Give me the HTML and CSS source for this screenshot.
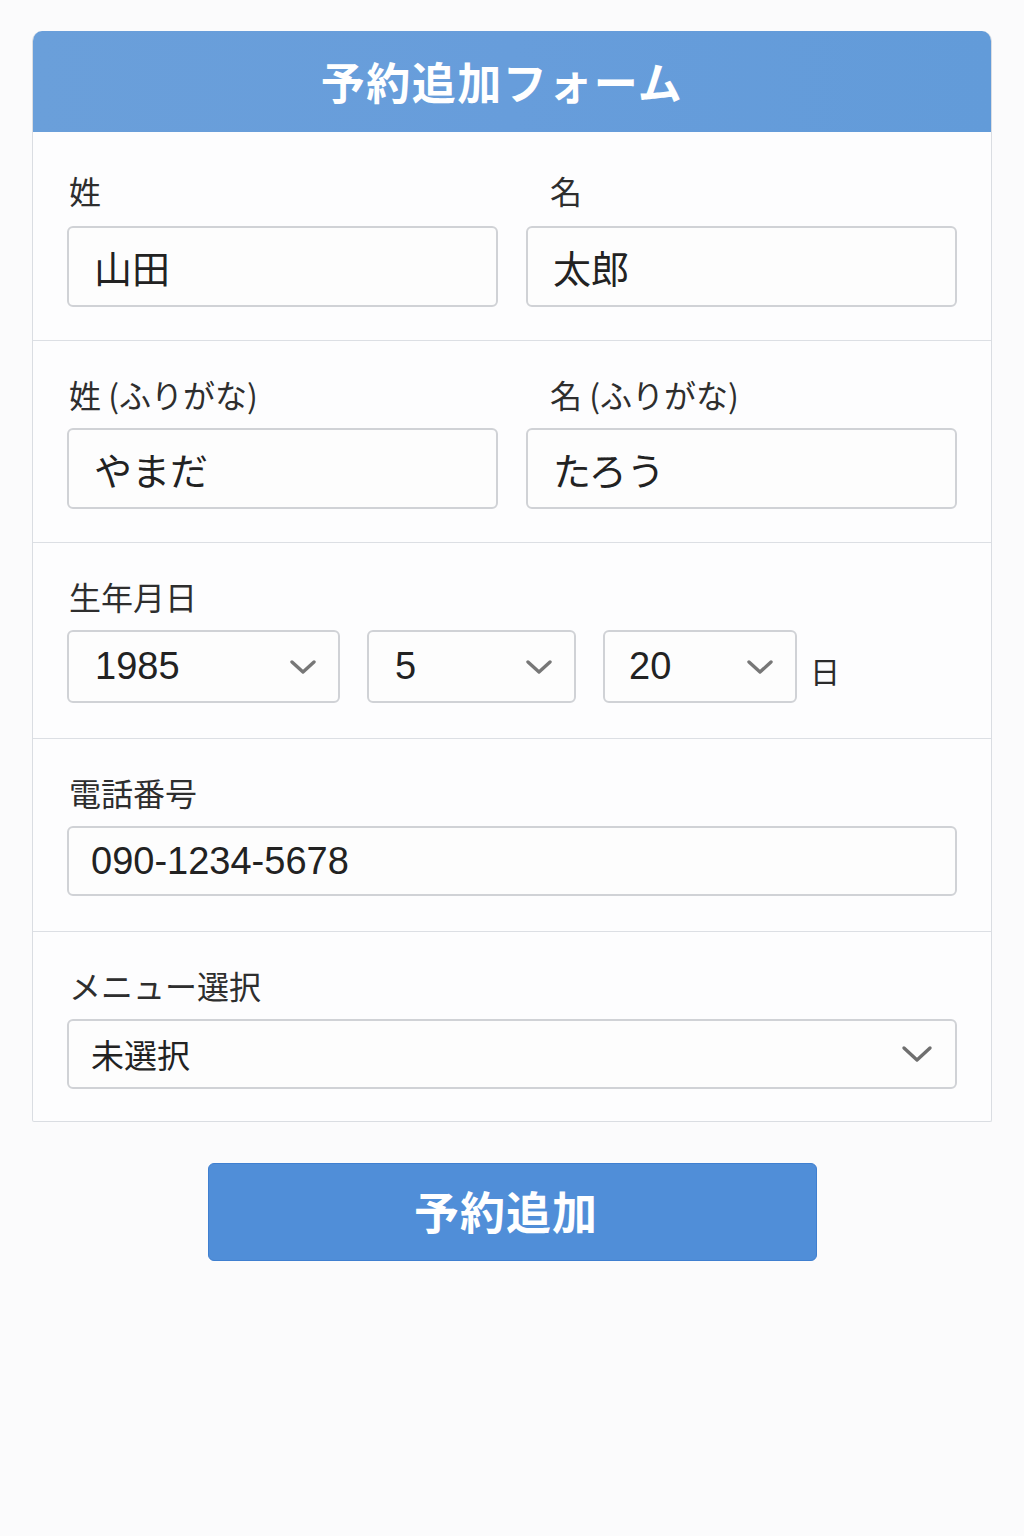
FILE: index.html
```html
<!DOCTYPE html>
<html lang="ja">
<head>
<meta charset="utf-8">
<title>予約追加フォーム</title>
<link rel="stylesheet" href="styles.css">
</head>
<body>
<div class="page">
  <div class="card">
    <div class="card-header">予約追加フォーム</div>

    <div class="section first">
      <div class="two-col">
        <div class="field">
          <div class="label">姓</div>
          <div class="input tall">山田</div>
        </div>
        <div class="field right">
          <div class="label">名</div>
          <div class="input tall">太郎</div>
        </div>
      </div>
    </div>

    <div class="section">
      <div class="two-col">
        <div class="field">
          <div class="label">姓 (ふりがな)</div>
          <div class="input tall">やまだ</div>
        </div>
        <div class="field right">
          <div class="label">名 (ふりがな)</div>
          <div class="input tall">たろう</div>
        </div>
      </div>
    </div>

    <div class="section dates">
      <div class="label">生年月日</div>
      <div class="date-row">
        <div class="select year"><span class="num">1985</span>
          <svg class="chev" width="26" height="14" viewBox="0 0 26 14"><path d="M2 2 L13 12 L24 2" fill="none" stroke="#777" stroke-width="3.4" stroke-linecap="round" stroke-linejoin="round"/></svg>
        </div>
        <div class="select month"><span class="num">5</span>
          <svg class="chev" width="26" height="14" viewBox="0 0 26 14"><path d="M2 2 L13 12 L24 2" fill="none" stroke="#777" stroke-width="3.4" stroke-linecap="round" stroke-linejoin="round"/></svg>
        </div>
        <div class="select day"><span class="num">20</span>
          <svg class="chev" width="26" height="14" viewBox="0 0 26 14"><path d="M2 2 L13 12 L24 2" fill="none" stroke="#777" stroke-width="3.4" stroke-linecap="round" stroke-linejoin="round"/></svg>
        </div>
        <span class="unit">日</span>
      </div>
    </div>

    <div class="section phone-sec">
      <div class="label">電話番号</div>
      <div class="input short phone">090-1234-5678</div>
    </div>

    <div class="section last">
      <div class="label">メニュー選択</div>
      <div class="select menu"><span>未選択</span>
        <svg class="chev" width="32" height="18" viewBox="0 0 32 18"><path d="M3 3 L16 15 L29 3" fill="none" stroke="#6f6f6f" stroke-width="3.4" stroke-linecap="round" stroke-linejoin="round"/></svg>
      </div>
    </div>
  </div>

  <div class="actions">
    <button class="submit" type="button">予約追加</button>
  </div>
</div>
</body>
</html>
```

FILE: styles.css
```css
* { box-sizing: border-box; }

html, body {
  margin: 0;
  padding: 0;
  background: #fbfbfc;
}

body {
  font-family: "Noto Sans CJK JP", "Noto Sans", sans-serif;
  color: #2b2b2b;
}

.page {
  padding: 31px 32px 40px;
}

.card {
  background: #fdfdfe;
  border: 1px solid #dadde2;
  border-top: none;
  border-radius: 10px 10px 2px 2px;
  overflow: hidden;
}

.card-header {
  height: 101px;
  background: linear-gradient(90deg, #6a9fda 0%, #679ddb 50%, #629bd9 100%);
  color: #ffffff;
  font-size: 44px;
  font-weight: 700;
  letter-spacing: 1.5px;
  display: flex;
  align-items: center;
  justify-content: center;
  padding: 0 20px 2px 0;
}

.section {
  padding: 33px 34px 33px;
  border-top: 1px solid #dcdfe4;
}

.section.first {
  padding-top: 38px;
  border-top: none;
}

.section.first .label { margin-bottom: 16px; }
.section.dates { padding-bottom: 35px; }
.section.phone-sec { padding-bottom: 35px; }
.section.last { padding-bottom: 32px; }

.two-col {
  display: grid;
  grid-template-columns: 1fr 1fr;
  column-gap: 28px;
}

.label {
  font-size: 32px;
  line-height: 40px;
  height: 40px;
  margin-bottom: 14px;
  color: #2e2e2e;
  padding-left: 2px;
  white-space: nowrap;
}

.field.right .label { padding-left: 24px; }

.input, .select {
  background: #fdfdfd;
  border: 2px solid #d0d2d6;
  border-radius: 6px;
  color: #222;
  display: flex;
  align-items: center;
}

.input.tall {
  height: 81px;
  font-size: 38px;
  padding-left: 25px;
}

.input.short {
  height: 70px;
  padding-left: 22px;
}

.phone, .num {
  font-family: "Liberation Sans", Arial, sans-serif;
  font-size: 38px;
}

.date-row {
  display: flex;
  align-items: center;
  gap: 27px;
}

.select {
  height: 73px;
  justify-content: space-between;
  padding: 0 22px 0 26px;
}

.select.year { width: 273px; }
.select.month { width: 209px; }
.select.day { width: 194px; padding-left: 24px; }

.unit {
  font-size: 30px;
  margin-left: -14px;
  margin-top: 6px;
}

.select.menu {
  height: 70px;
  font-size: 33px;
  padding-left: 22px;
  padding-right: 22px;
}

.chev { display: block; }

.actions {
  display: flex;
  justify-content: center;
  padding-top: 41px;
}

.submit {
  width: 609px;
  height: 98px;
  background: #508ed8;
  border: 1px solid #3f7fd0;
  border-radius: 6px;
  color: #ffffff;
  font-family: "Noto Sans CJK JP", "Noto Sans", sans-serif;
  font-size: 45px;
  font-weight: 700;
  letter-spacing: 1px;
  padding: 0 12px 4px 0;
}
```
